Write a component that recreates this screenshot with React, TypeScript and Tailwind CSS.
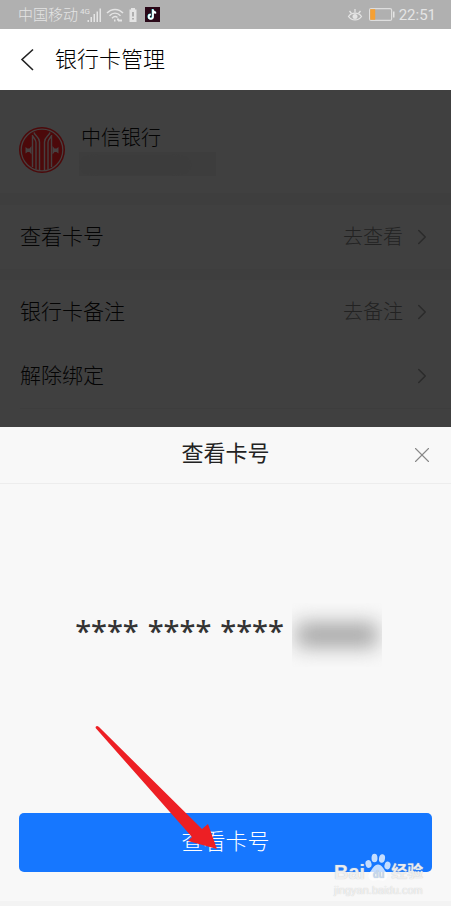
import { ChevronRight, X } from "lucide-react";

function StatusBar() {
  return (
    <div className="h-[29px] shrink-0 bg-[#b0b0b0] text-[#e4e4e4] flex items-center justify-between pl-[18px] pr-[15px]">
      <div className="flex items-center">
        <span className="text-[15px] leading-5 font-light">中国移动</span>
        <svg className="ml-0.5" width="24" height="16" viewBox="0 0 24 16" fill="currentColor">
          <text x="0" y="7" fontSize="8" fontFamily="Roboto, sans-serif">4G</text>
          <rect x="7.500" y="13" width="1.500" height="2" />
          <rect x="10.500" y="10" width="1.500" height="5" />
          <rect x="13.500" y="7" width="1.500" height="8" />
          <rect x="16.500" y="4.500" width="1.500" height="10.500" />
          <rect x="19.500" y="1.500" width="1.500" height="13.500" />
        </svg>
        <svg className="ml-0.5" width="18" height="16" viewBox="0 0 18 16" fill="none" stroke="currentColor" strokeWidth="1.500">
          <path d="M1 6C5.500 1.200 12.500 1.200 17 6M3.500 8.700C6.800 5.400 11.200 5.400 14.500 8.700M6 11.200C7.800 9.400 10.200 9.400 11.500 10.500" />
          <path d="M8 13.500h1.500M12 13.500h4M12 11.500v2" strokeWidth="2" />
        </svg>
        <svg className="ml-1" width="10" height="16" viewBox="0 0 10 16">
          <path d="M3 1h4v1.500h1.500V15h-7V2.500H3z" fill="currentColor" />
          <path d="M5 5v4.500M5 11v1.500" stroke="#999" strokeWidth="1.400" />
        </svg>
        <svg className="ml-[7px]" width="15" height="15" viewBox="0 0 15 15" fill="none">
          <rect width="15" height="15" fill="#2a0818" />
          <path d="M8 2.500v7.300a2.100 2.100 0 1 1-2.100-2.100M8 3c.3 1.700 1.500 2.700 3.200 2.800" stroke="#5ff" strokeWidth="1.800" transform="translate(-.4 -.4)" />
          <path d="M8 2.500v7.300a2.100 2.100 0 1 1-2.100-2.100M8 3c.3 1.700 1.500 2.700 3.200 2.800" stroke="#fff" strokeWidth="1.700" />
        </svg>
      </div>
      <div className="flex items-center">
        <svg width="16" height="14" viewBox="0 0 16 14" fill="none" stroke="currentColor" strokeWidth="1.300">
          <path d="M1.500 8.500C4.500 4 11.500 4 14.500 8.500C11.500 13 4.500 13 1.500 8.500z" />
          <path d="M8 1v3.500M2.500 3l2 2.500M13.500 3l-2 2.500" />
          <circle cx="8" cy="8.500" r="2.500" fill="currentColor" stroke="none" />
        </svg>
        <svg className="ml-1.5" width="26" height="13" viewBox="0 0 26 13" fill="none">
          <rect x=".6" y=".6" width="22" height="11.800" rx="1.500" stroke="#dedede" strokeWidth="1.200" />
          <rect x="1.200" y="1.200" width="5" height="10.600" fill="#f5a033" />
          <rect x="24" y="3.500" width="1.500" height="6" fill="#e4e4e4" />
        </svg>
        <time className="ml-1 text-[15px] leading-5">22:51</time>
      </div>
    </div>
  );
}

function BankLogo() {
  return (
    <svg className="relative z-10 shrink-0" width="46" height="46" viewBox="0 0 46 46" fill="none">
      <circle cx="23" cy="23" r="23" fill="#4c090a" />
      <circle cx="23" cy="23" r="20.800" stroke="#474040" strokeWidth="1.300" />
      <g stroke="#474040" strokeWidth="1.400">
        <path d="M15 5.500C16 9 20.500 10 20.500 15v28M31 5.500C30 9 25.500 10 25.500 15v28" />
        <path d="M13.500 40V8C14 11 17 12 17 15.500v27M32.500 40V8C32 11 29 12 29 15.500v27" />
      </g>
      <path d="M6.500 20l2 1.500h2L12.500 19v8.500l-2-2.500h-2l-2 1.500zM39.500 20l-2 1.500h-2L33.500 19v8.500l2-2.500h2l2 1.500z" fill="#474040" />
    </svg>
  );
}

function Row({ label, action }: { label: string; action?: string }) {
  return (
    <button className="w-full h-16 bg-white pl-5 pr-4 flex items-center justify-between">
      <span className="text-[21px] leading-8 font-light text-[#111]">{label}</span>
      <span className="flex items-center gap-1.5 text-xl font-light text-[#888]">
        {action}
        <ChevronRight className="text-[#aaa]" size={26} strokeWidth={1.5} />
      </span>
    </button>
  );
}

function Watermark() {
  return (
    <div className="absolute right-[27px] bottom-2 w-[90px] text-white/75 pointer-events-none [text-shadow:0_0_1px_#bbb]">
      <div className="flex items-end h-[30px]">
        <span className="text-xl leading-5 font-bold font-['Liberation_Sans',sans-serif]">Bai</span>
        <svg width="26" height="30" viewBox="0 0 26 30" fill="currentColor">
          <ellipse cx="3.500" cy="12" rx="3" ry="4" transform="rotate(-15 3.500 12)" />
          <ellipse cx="9.500" cy="6" rx="3" ry="4.300" />
          <ellipse cx="17" cy="6.500" rx="3" ry="4.300" transform="rotate(10 17 6.500)" />
          <ellipse cx="22.500" cy="13.500" rx="3" ry="4" transform="rotate(15 22.500 13.500)" />
          <path d="M13 12.500c4 0 5 4 8 7.500 4 5-1 9.500-4.500 8.500-2.500-.7-4.500-.7-7 0C5.500 29.500 1 25 5 20c3-3.500 4-7.500 8-7.500z" />
          <text x="8" y="26" fontSize="10" fontWeight="bold" fill="#c4d8f0">du</text>
        </svg>
        <span className="text-base leading-5 font-bold">经验</span>
      </div>
      <div className="text-[11px] leading-4 font-['Liberation_Sans',sans-serif]">jingyan.baidu.com</div>
    </div>
  );
}

export default function App() {
  return (
    <div className="min-h-screen bg-white pr-px flex flex-col font-['Roboto','Noto_Sans_CJK_SC',sans-serif]">
      <StatusBar />
      <header className="h-[61px] shrink-0 bg-white flex items-center pl-[11px]">
        <button aria-label="返回">
          <svg width="32" height="32" viewBox="0 0 32 32" fill="none" stroke="#222" strokeWidth="1.600">
            <path d="M22 5.500 11 15.500l11 10.500" />
          </svg>
        </button>
        <h1 className="ml-3 text-[22px] leading-8 font-light text-black">银行卡管理</h1>
      </header>

      <main className="relative bg-[#f5f5f5]">
        <section className="h-[103px] bg-white flex items-center pt-4 pl-[19px]">
          <BankLogo />
          <div className="ml-3.5">
            <div className="pl-0.5 text-xl leading-7 font-light text-[#111]">中信银行</div>
            <div className="w-[137px] h-6 bg-[#f4f4f4] overflow-hidden">
              <div className="w-28 h-2.5 mt-2 bg-[#e6e6e6] blur-sm" />
            </div>
          </div>
        </section>
        <div className="mt-3">
          <Row label="查看卡号" action="去查看" />
        </div>
        <div className="mt-[11px] bg-white pb-[18px]">
          <Row label="银行卡备注" action="去备注" />
          <Row label="解除绑定" />
          <div className="ml-5 border-t border-[#f4f4f4]" />
        </div>
        <div className="absolute inset-0 bg-black/75" />
      </main>

      <section role="dialog" aria-label="查看卡号" className="relative flex-1 bg-[#f8f8f8] flex flex-col">
        <div className="h-[57px] border-b border-[#ededed] grid grid-cols-[1fr_auto_1fr] items-center px-4">
          <h2 className="col-start-2 pb-0.5 text-[22px] leading-8 text-[#222]">查看卡号</h2>
          <button aria-label="关闭" className="justify-self-end">
            <X className="text-[#888]" size={26} strokeWidth={1} />
          </button>
        </div>
        <div className="flex-1 flex items-center justify-center pb-7 pl-1.5 text-[#333]">
          <div className="flex gap-[9px] pb-2 text-[29px] leading-10 font-medium font-['Noto_Sans',sans-serif]">
            <span>****</span>
            <span>****</span>
            <span>****</span>
          </div>
          <div className="ml-2 w-[90px] h-16 overflow-hidden flex items-center justify-center">
            <div className="w-20 h-6 bg-[#a4a4a4] blur-[10px]" />
          </div>
        </div>
        <button className="mx-[19px] h-[59px] pb-0.5 shrink-0 rounded-[5px] bg-[#1677ff] text-[22px] font-light text-white">
          查看卡号
        </button>
        <div className="mt-[29px] h-[5px] bg-[#f3f3f3]" />

        <Watermark />
        {/* pointer arrow, from the empty area down onto the button */}
        <svg className="absolute left-[95px] bottom-[54px] pointer-events-none" width="124" height="128" viewBox="0 0 124 128">
          <path d="M1 2.500Q2 1.500 4 3L107 105L113 100L122 125L93 117L97 113L1.500 5Q0 3.500 1 2.500z" fill="#ed1f24" />
        </svg>
      </section>
    </div>
  );
}
